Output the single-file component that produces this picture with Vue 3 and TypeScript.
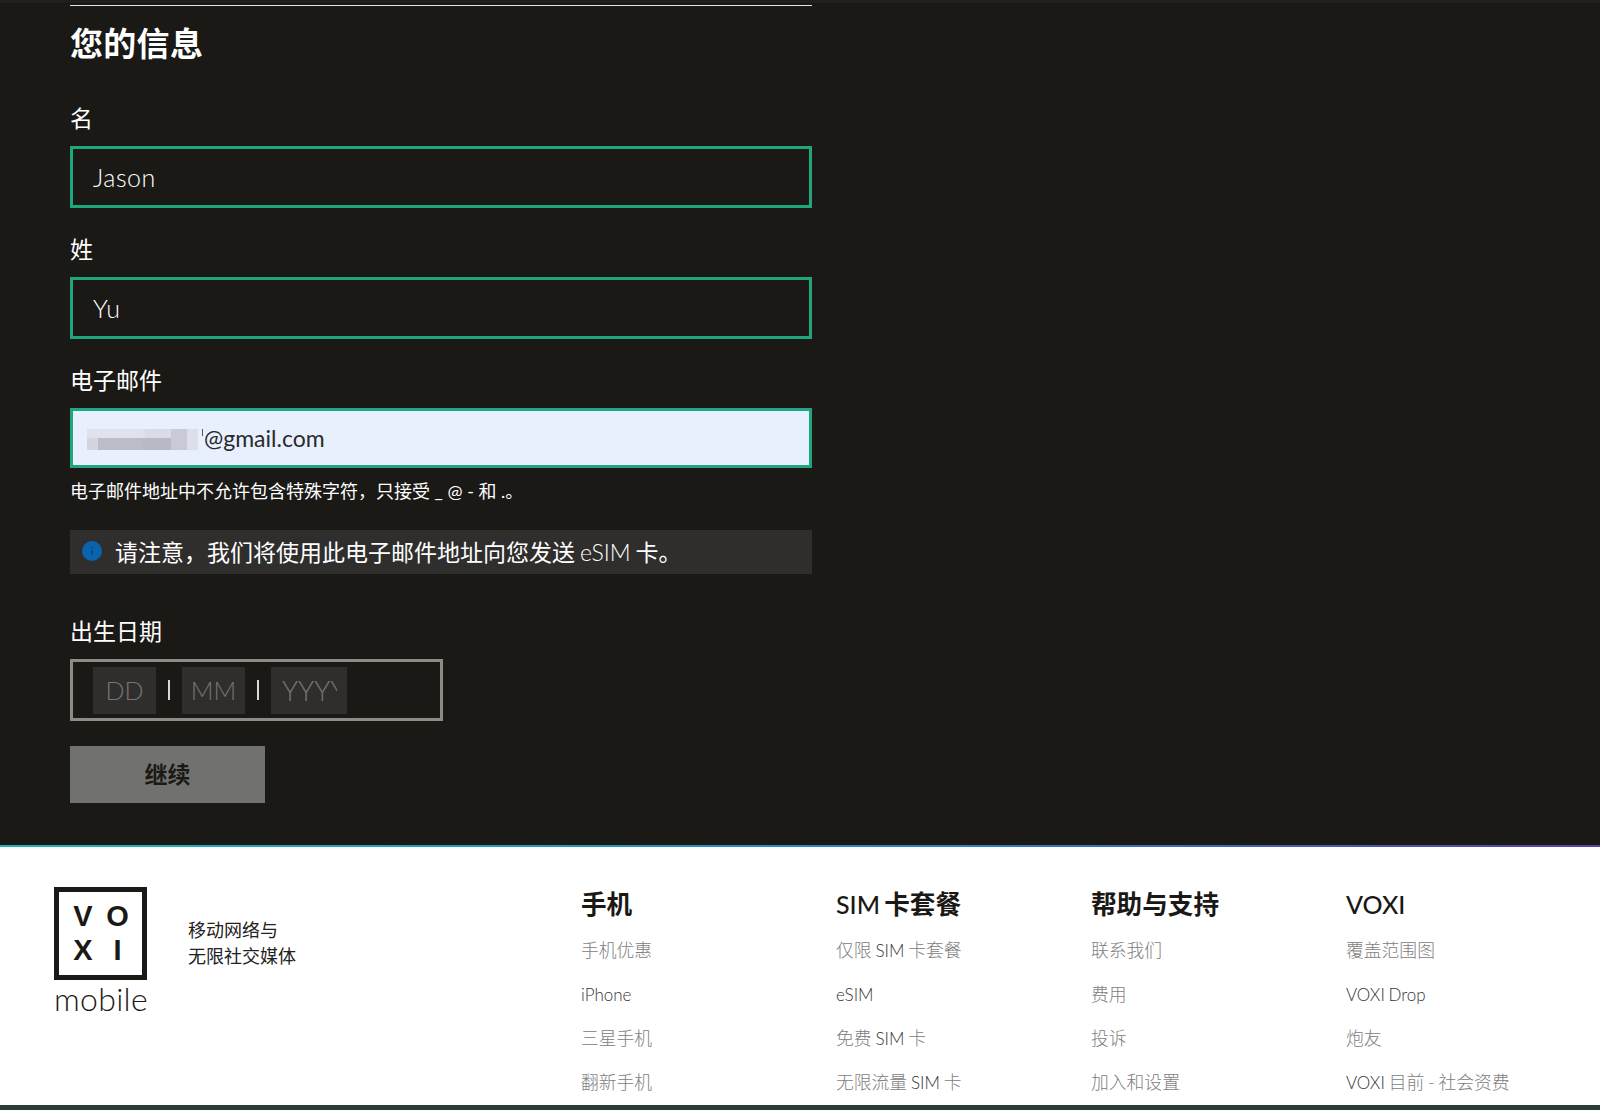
<script setup lang="ts">
interface Part {
  text: string
  latin?: boolean
}

const blurCells = [
  { left: 0, top: 3, width: 58, height: 9, tone: '#dfe2ec' },
  { left: 0, top: 12, width: 11, height: 12, tone: '#d3d6e0' },
  { left: 11, top: 12, width: 44, height: 12, tone: '#bbbdc9' },
  { left: 55, top: 12, width: 36, height: 12, tone: '#b7b9c5' },
  { left: 58, top: 3, width: 26, height: 9, tone: '#d9dce6' },
  { left: 84, top: 3, width: 16, height: 21, tone: '#c8cbd7' },
  { left: 100, top: 3, width: 11, height: 21, tone: '#dcdfe9' }
]

const columns: { title: Part[]; items: Part[][] }[] = [
  {
    title: [{ text: '手机' }],
    items: [
      [{ text: '手机优惠' }],
      [{ text: 'iPhone', latin: true }],
      [{ text: '三星手机' }],
      [{ text: '翻新手机' }]
    ]
  },
  {
    title: [{ text: 'SIM', latin: true }, { text: ' 卡套餐' }],
    items: [
      [{ text: '仅限 ' }, { text: 'SIM', latin: true }, { text: ' 卡套餐' }],
      [{ text: 'eSIM', latin: true }],
      [{ text: '免费 ' }, { text: 'SIM', latin: true }, { text: ' 卡' }],
      [{ text: '无限流量 ' }, { text: 'SIM', latin: true }, { text: ' 卡' }]
    ]
  },
  {
    title: [{ text: '帮助与支持' }],
    items: [
      [{ text: '联系我们' }],
      [{ text: '费用' }],
      [{ text: '投诉' }],
      [{ text: '加入和设置' }]
    ]
  },
  {
    title: [{ text: 'VOXI', latin: true }],
    items: [
      [{ text: '覆盖范围图' }],
      [{ text: 'VOXI Drop', latin: true }],
      [{ text: '炮友' }],
      [{ text: 'VOXI', latin: true }, { text: ' 目前 - 社会资费' }]
    ]
  }
]
</script>

<template>
  <div class="page">
    <main class="form-area">
      <div class="top-rule"></div>
      <h2 class="heading">您的信息</h2>

      <label class="label first">名</label>
      <div class="field">Jason</div>

      <label class="label">姓</label>
      <div class="field">Yu</div>

      <label class="label">电子邮件</label>
      <div class="field autofill">
        <span class="blur">
          <i
            v-for="(cell, i) in blurCells"
            :key="i"
            :style="{ left: cell.left + 'px', top: cell.top + 'px', width: cell.width + 'px', height: cell.height + 'px', background: cell.tone }"
          ></i>
        </span>
        <span class="blur-tick"></span>
        <span>@gmail.com</span>
      </div>
      <p class="hint">电子邮件地址中不允许包含特殊字符&#xFF0C;只接受 _ @ - 和 .。</p>

      <div class="notice">
        <svg class="info" viewBox="0 0 20 20" width="20" height="20">
          <circle cx="10" cy="10" r="10" fill="#0a64ad" />
          <rect x="9.4" y="9" width="1.2" height="5" fill="#0b3f6e" />
          <rect x="9.4" y="6" width="1.2" height="1.4" fill="#0b3f6e" />
        </svg>
        <span>请注意&#xFF0C;我们将使用此电子邮件地址向您发送 <span class="latin">eSIM</span> 卡。</span>
      </div>

      <label class="label dob">出生日期</label>
      <div class="date-box">
        <div class="seg seg-short">DD</div>
        <span class="sep"></span>
        <div class="seg seg-short">MM</div>
        <span class="sep"></span>
        <div class="seg seg-long"><span class="seg-clip">YYYY</span></div>
      </div>

      <button class="continue">继续</button>
    </main>

    <footer class="footer">
      <div class="brand">
        <div class="logo">
          <div class="logo-box">
            <span>V</span><span>O</span><span>X</span><span>I</span>
          </div>
          <div class="logo-word">mobile</div>
        </div>
        <p class="tagline">移动网络与<br />无限社交媒体</p>
      </div>

      <nav class="links">
        <div v-for="(col, c) in columns" :key="c" class="col">
          <h4 class="col-title">
            <span v-for="(p, i) in col.title" :key="i" :class="{ 'title-latin': p.latin }">{{ p.text }}</span>
          </h4>
          <div v-for="(item, r) in col.items" :key="r" class="col-item">
            <span v-for="(p, i) in item" :key="i" :class="{ dark: p.latin }">{{ p.text }}</span>
          </div>
        </div>
      </nav>
    </footer>
    <div class="bottom-strip"></div>
  </div>
</template>

<style scoped>
.page {
  width: 1600px;
  height: 1110px;
  overflow: hidden;
  display: flex;
  flex-direction: column;
  background: #1a1915;
  font-family: Lato, "Noto Sans CJK SC", sans-serif;
}

.form-area {
  height: 845px;
  flex: none;
  padding: 5px 0 0 70px;
  box-sizing: border-box;
  color: #fff;
  box-shadow: inset 0 3px 0 #201f1d;
}

.top-rule {
  width: 742px;
  height: 1px;
  background: #e6e6e4;
}

.heading {
  margin: 15px 0 0;
  font-size: 33px;
  line-height: 44px;
  font-weight: 700;
  letter-spacing: 0.3px;
}

.label {
  display: block;
  margin-top: 23px;
  height: 46px;
  font-size: 23px;
  line-height: 36px;
}

.label.first {
  margin-top: 35px;
}

.field {
  width: 742px;
  height: 62px;
  box-sizing: border-box;
  border: 3px solid #1fa67f;
  padding-left: 20px;
  display: flex;
  align-items: center;
  font-size: 25px;
  font-weight: 300;
  letter-spacing: 0.5px;
}

.autofill {
  height: 60px;
  padding-left: 14px;
  background: #e8f0fe;
  color: #2a2a2a;
  font-weight: 400;
  font-size: 23px;
  letter-spacing: 0;
}

.blur {
  position: relative;
  width: 111px;
  height: 24px;
  flex: none;
  filter: blur(0.7px);
}

.blur i {
  position: absolute;
}

.blur-tick {
  width: 5px;
  height: 24px;
  margin-right: 1px;
  flex: none;
  box-sizing: border-box;
  border-top: 1px solid #555660;
  border-right: 1px solid #555660;
  clip-path: inset(3px 0 14px 0);
}

.hint {
  margin: 13px 0 0;
  font-size: 18px;
  line-height: 20px;
}

.notice {
  width: 742px;
  height: 44px;
  margin-top: 29px;
  padding: 0 0 2px 12px;
  box-sizing: border-box;
  display: flex;
  align-items: center;
  gap: 13px;
  background: #2f2e2c;
  font-size: 23px;
  word-spacing: -1px;
}

.latin {
  font-weight: 300;
}

.info {
  flex: none;
}

.label.dob {
  margin-top: 39px;
}

.date-box {
  width: 373px;
  height: 62px;
  box-sizing: border-box;
  border: 3px solid #8c8b86;
  padding-left: 20px;
  display: flex;
  align-items: center;
}

.seg {
  height: 47px;
  display: flex;
  align-items: center;
  justify-content: center;
  overflow: hidden;
  background: #2f2e2c;
  color: #757471;
  font-size: 25px;
  font-weight: 300;
}

.seg-short {
  width: 63px;
}

.seg-long {
  width: 76px;
  justify-content: flex-start;
  padding-left: 11px;
  box-sizing: border-box;
  font-size: 27px;
}

.seg-clip {
  width: 55px;
  overflow: hidden;
  white-space: nowrap;
}

.sep {
  width: 2px;
  height: 20px;
  margin: 0 12px;
  background: #d8d8d6;
}

.continue {
  display: block;
  width: 195px;
  height: 57px;
  margin-top: 25px;
  padding: 0 0 3px;
  border: none;
  background: #71716f;
  color: #1a1915;
  font-family: inherit;
  font-size: 23px;
  font-weight: 700;
}

.footer {
  flex: 1;
  display: flex;
  background: #fff;
  border-top: 2px solid;
  border-image: linear-gradient(90deg, #1fb5b5, #2f7fc0 60%, #5a3fa8) 1;
}

.brand {
  width: 581px;
  padding: 40px 0 0 54px;
  box-sizing: border-box;
  display: flex;
  flex: none;
}

.logo {
  width: 93px;
  flex: none;
}

.logo-box {
  width: 93px;
  height: 93px;
  box-sizing: border-box;
  border: 5px solid #1a1915;
  padding: 14px 0 0 14px;
  display: grid;
  grid-template-columns: 20px 21px;
  grid-auto-rows: 21px;
  column-gap: 14px;
  row-gap: 13px;
  justify-items: center;
  color: #1a1915;
  font-family: "Liberation Sans", sans-serif;
  font-size: 29px;
  font-weight: 700;
  line-height: 21px;
}

.logo-word {
  margin-top: 1px;
  font-size: 32px;
  line-height: 36px;
  font-weight: 300;
  letter-spacing: 0.3px;
  color: #1a1915;
  text-align: center;
}

.tagline {
  margin: 31px 0 0 41px;
  font-size: 18px;
  line-height: 25.5px;
  color: #222;
}

.links {
  display: grid;
  grid-template-columns: repeat(4, 255px);
  padding-top: 40px;
}

.col-title {
  margin: 0 0 7px;
  font-size: 25.6px;
  line-height: 34px;
  font-weight: 700;
  color: #1a1915;
  word-spacing: -2px;
}

.title-latin {
  font-size: 25px;
  font-weight: 500;
}

.col-item {
  height: 44px;
  line-height: 44px;
  font-size: 17.8px;
  font-weight: 300;
  color: #808080;
  white-space: nowrap;
  word-spacing: -1px;
}

.col-item .dark {
  color: #333;
  font-size: 17px;
}

.bottom-strip {
  height: 5px;
  flex: none;
  background: #2a3d38;
}
</style>

<style>
html,
body {
  margin: 0;
  background: #1a1915;
}
</style>
